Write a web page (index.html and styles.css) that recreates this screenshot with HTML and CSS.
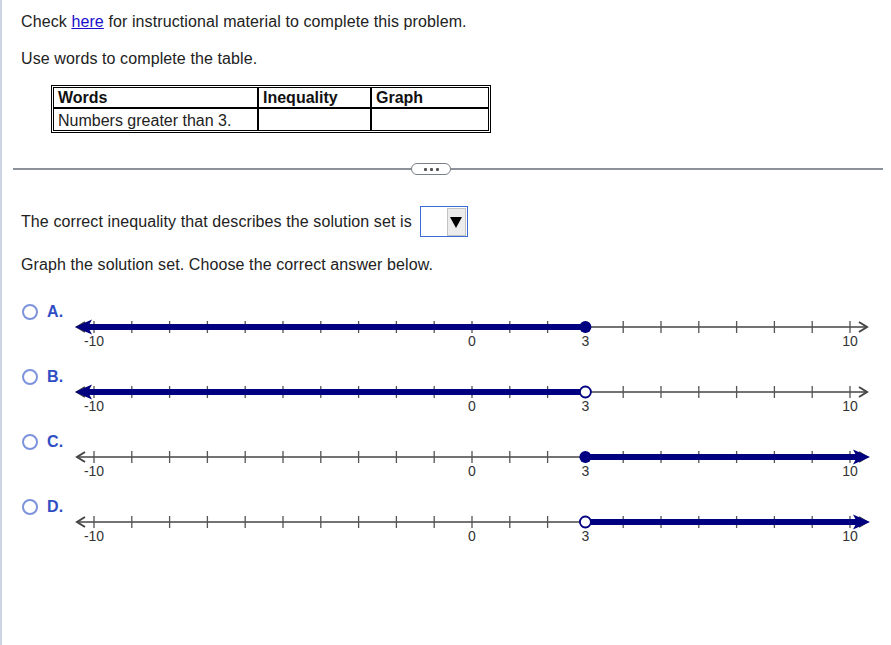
FILE: index.html
```html
<!DOCTYPE html>
<html>
<head>
<meta charset="utf-8">
<link rel="stylesheet" href="styles.css">
</head>
<body>
<svg class="defs" width="0" height="0">
  <defs>
    <g id="axis">
      <line x1="12" y1="16" x2="802" y2="16" stroke="#444" stroke-width="1.5"/>
      <path d="M20 11 L12 16 L20 21 M794 11 L802 16 L794 21" fill="none" stroke="#444" stroke-width="2"/>
      <path d="M29 10v12M66.8 10v12M104.6 10v12M142.4 10v12M180.2 10v12M218 10v12M255.8 10v12M293.6 10v12M331.4 10v12M369.2 10v12M407 10v12M444.8 10v12M482.6 10v12M520.4 10v12M558.2 10v12M596 10v12M633.8 10v12M671.6 10v12M709.4 10v12M747.2 10v12M785 10v12" stroke="#555" stroke-width="1.3"/>
      <g class="nl-label">
        <text x="29" y="35">-10</text>
        <text x="407" y="35">0</text>
        <text x="520.4" y="35">3</text>
        <text x="785" y="35">10</text>
      </g>
    </g>
  </defs>
</svg>
<div class="page">
  <p class="line first">Check <a href="#">here</a> for instructional material to complete this problem.</p>
  <p class="line gap">Use words to complete the table.</p>
  <table class="tbl">
    <tr><th class="c1">Words</th><th class="c2">Inequality</th><th class="c3">Graph</th></tr>
    <tr><td class="row2">Numbers greater than 3.</td><td></td><td></td></tr>
  </table>
  <div class="sep">
    <div class="pill"><span></span><span></span><span></span></div>
  </div>
  <div class="ineq">
    <span>The correct inequality that describes the solution set is</span>
    <div class="dd">
      <div class="ddbtn">
        <svg width="12" height="12" viewBox="0 0 12 12"><path d="M0 1 H12 L6 12 Z" fill="#000"/></svg>
      </div>
    </div>
  </div>
  <p class="line graphq">Graph the solution set. Choose the correct answer below.</p>

  <div class="opts">
    <div class="opt">
      <div class="lab"><span class="radio"></span><b>A.</b></div>
      <svg class="nl" width="815" height="50" viewBox="0 0 815 50">
        <use href="#axis"/>
        <line x1="20" y1="16" x2="520.4" y2="16" stroke="#000080" stroke-width="6"/>
        <polygon points="10,16 27,8.5 23,16 27,23.5" fill="#000080"/>
        <circle cx="520.4" cy="16" r="6" fill="#000080"/>
      </svg>
    </div>
    <div class="opt">
      <div class="lab"><span class="radio"></span><b>B.</b></div>
      <svg class="nl" width="815" height="50" viewBox="0 0 815 50">
        <use href="#axis"/>
        <line x1="20" y1="16" x2="515" y2="16" stroke="#000080" stroke-width="6"/>
        <polygon points="10,16 27,8.5 23,16 27,23.5" fill="#000080"/>
        <circle cx="520.4" cy="16" r="5.5" fill="#fff" stroke="#000080" stroke-width="1.8"/>
      </svg>
    </div>
    <div class="opt">
      <div class="lab"><span class="radio"></span><b>C.</b></div>
      <svg class="nl" width="815" height="50" viewBox="0 0 815 50">
        <use href="#axis"/>
        <line x1="520.4" y1="16" x2="795" y2="16" stroke="#000080" stroke-width="6"/>
        <polygon points="805,16 788,8.5 792,16 788,23.5" fill="#000080"/>
        <circle cx="520.4" cy="16" r="6" fill="#000080"/>
      </svg>
    </div>
    <div class="opt">
      <div class="lab"><span class="radio"></span><b>D.</b></div>
      <svg class="nl" width="815" height="50" viewBox="0 0 815 50">
        <use href="#axis"/>
        <line x1="526" y1="16" x2="795" y2="16" stroke="#000080" stroke-width="6"/>
        <polygon points="805,16 788,8.5 792,16 788,23.5" fill="#000080"/>
        <circle cx="520.4" cy="16" r="5.5" fill="#fff" stroke="#000080" stroke-width="1.8"/>
      </svg>
    </div>
  </div>
</div>
</body>
</html>
```
FILE: styles.css
```css
html, body {
  margin: 0;
  padding: 0;
  background: #fff;
}
body {
  font-family: "Liberation Sans", Arial, sans-serif;
  font-size: 16px;
  color: #222;
  letter-spacing: 0.1px;
}
.defs {
  position: absolute;
  width: 0;
  height: 0;
  overflow: hidden;
}
.page {
  border-left: 2px solid #cdd4e4;
  min-height: 645px;
  box-sizing: border-box;
  padding: 12px 0 0 19px;
}
.line {
  margin: 0;
  line-height: 20px;
}
.line a {
  color: #1a0dcc;
}
.gap {
  margin-top: 17px;
}
.tbl {
  margin: 16px 0 0 30px;
  border: 1px solid #000;
  border-collapse: separate;
  border-spacing: 0;
  padding: 1px;
  width: 440px;
  letter-spacing: 0;
}
.tbl th, .tbl td {
  border: 1px solid #000;
  padding: 0 4px;
  text-align: left;
  line-height: 19px;
  height: 19px;
}
.tbl .row2 {
  height: 20px;
  padding-top: 1px;
}
.tbl th {
  font-weight: bold;
  color: #111;
}
.tbl .c1 { width: 195px; }
.tbl .c2 { width: 103px; }
.sep {
  margin: 30px 0 0 -8px;
  width: 870px;
  height: 12px;
  display: flex;
  align-items: center;
  justify-content: center;
  background: linear-gradient(#8c929a, #8c929a) no-repeat 0 50% / 100% 2px;
}
.pill {
  width: 38px;
  height: 10px;
  border: 1px solid #7a7f86;
  border-radius: 6px;
  background: #fff;
  display: flex;
  align-items: center;
  justify-content: center;
  gap: 3px;
  margin-left: -34px;
}
.pill span {
  width: 3px;
  height: 3px;
  background: #555;
  border-radius: 1px;
}
.ineq {
  margin-top: 31px;
  display: flex;
  align-items: center;
  gap: 8px;
  height: 31px;
}
.dd {
  width: 45px;
  height: 29px;
  border: 1px solid #3a6bd0;
  display: flex;
  justify-content: flex-end;
  align-items: center;
  padding-right: 1px;
}
.ddbtn {
  width: 17px;
  height: 26px;
  background: #ececec;
  border: 1px solid #c4c4c4;
  display: flex;
  align-items: center;
  justify-content: center;
}
.graphq {
  margin-top: 18px;
}
.opts {
  margin-top: 28px;
}
.opt {
  display: flex;
  align-items: flex-start;
  height: 65px;
}
.lab {
  display: flex;
  align-items: center;
  gap: 9px;
  width: 43px;
  height: 18px;
  padding-left: 1px;
  color: #2f4ec4;
  line-height: 18px;
}
.radio {
  width: 12px;
  height: 12px;
  border: 2px solid #7d93dc;
  border-radius: 50%;
  flex: none;
}
.lab b {
  font-weight: bold;
}
.nl {
  margin-top: 8px;
  display: block;
  flex: none;
}
.nl-label text {
  font-family: "Liberation Sans", Arial, sans-serif;
  font-size: 14px;
  fill: #333;
  text-anchor: middle;
  letter-spacing: 0;
}
```
